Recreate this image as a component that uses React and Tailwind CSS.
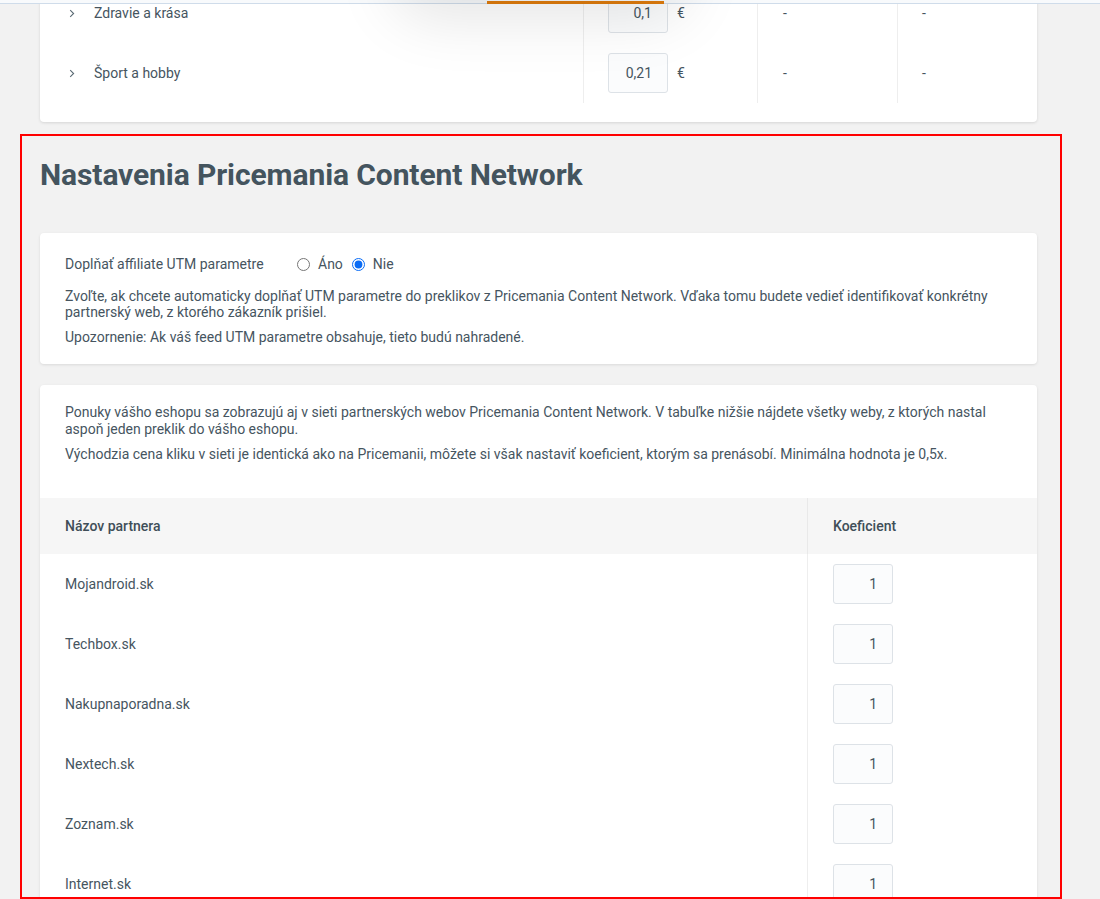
const categories = [
  { name: "Zdravie a krása", price: "0,1" },
  { name: "Šport a hobby", price: "0,21" },
];

const partners = [
  "Mojandroid.sk",
  "Techbox.sk",
  "Nakupnaporadna.sk",
  "Nextech.sk",
  "Zoznam.sk",
  "Internet.sk",
];

function Chevron() {
  return (
    <svg width="6" height="9" viewBox="0 0 6 9" className="shrink-0">
      <path d="M1.2 1.2 L4.6 4.5 L1.2 7.8" fill="none" stroke="#5b6b75" strokeWidth="1.1" />
    </svg>
  );
}

function NumBox({ value }) {
  return (
    <div className="flex h-[40px] w-[60px] items-center justify-end rounded-[3px] border border-[#dde2e7] bg-[#fbfcfd] pr-[15px] text-[14px] text-[#46555f]">
      {value}
    </div>
  );
}

export default function App() {
  return (
    <div
      className="relative min-h-[899px] overflow-hidden bg-[#f2f2f2] text-[14px] text-[#46555f]"
      style={{ fontFamily: "Roboto, 'Noto Sans', Arial, sans-serif" }}
    >
      <div className="ml-10 w-[997px]">
        {/* tail of the category price card */}
        <div className="-mt-[17px] rounded-b-[4px] bg-white pb-[19px] shadow-[0_1px_3px_rgba(0,0,0,0.12)]">
          {categories.map((c) => (
            <div key={c.name} className="flex h-[60px]">
              <div className="flex w-[543px] items-center gap-[19px] pl-[29px]">
                <Chevron />
                <span>{c.name}</span>
              </div>
              <div className="flex w-[174px] items-center gap-[9px] border-l border-[#eeeeee] pl-[24px]">
                <NumBox value={c.price} />
                <span>€</span>
              </div>
              <div className="flex w-[140px] items-center border-l border-[#eeeeee] pl-[25px]">-</div>
              <div className="flex flex-1 items-center border-l border-[#eeeeee] pl-[24px]">-</div>
            </div>
          ))}
        </div>

        <h1 className="mt-[35px] text-[30px] font-bold leading-[36px] tracking-[-0.1px] text-[#44545e]">
          Nastavenia Pricemania Content Network
        </h1>

        <div className="mt-[40px] rounded-[4px] bg-white px-[25px] pb-[19px] pt-[21px] shadow-[0_1px_3px_rgba(0,0,0,0.1)]">
          <div className="flex h-[20px] items-center">
            <span className="w-[232px]">Doplňať affiliate UTM parametre</span>
            <label className="flex items-center">
              <input type="radio" name="utm" className="m-0 h-[13px] w-[13px]" />
              <span className="ml-[8px]">Áno</span>
            </label>
            <label className="ml-[9px] flex items-center">
              <input type="radio" name="utm" defaultChecked className="m-0 h-[13px] w-[13px] accent-[#0a6cf5]" />
              <span className="ml-[8px]">Nie</span>
            </label>
          </div>
          <p className="mt-[14px] leading-[16px]">
            Zvoľte, ak chcete automaticky doplňať UTM parametre do preklikov z Pricemania Content Network. Vďaka tomu budete vedieť identifikovať konkrétny partnerský web, z ktorého zákazník prišiel.
          </p>
          <p className="mt-[9px] leading-[16px]">
            Upozornenie: Ak váš feed UTM parametre obsahuje, tieto budú nahradené.
          </p>
        </div>

        <div className="mt-[21px] rounded-[4px] bg-white shadow-[0_1px_3px_rgba(0,0,0,0.1)]">
          <div className="px-[25px] pb-[35px] pt-[19px]">
            <p className="leading-[17px]">
              Ponuky vášho eshopu sa zobrazujú aj v sieti partnerských webov Pricemania Content Network. V tabuľke nižšie nájdete všetky weby, z ktorých nastal aspoň jeden preklik do vášho eshopu.
            </p>
            <p className="mt-[8px] leading-[17px]">
              Východzia cena kliku v sieti je identická ako na Pricemanii, môžete si však nastaviť koeficient, ktorým sa prenásobí. Minimálna hodnota je 0,5x.
            </p>
          </div>
          <div className="flex h-[56px] bg-[#f6f6f6] font-medium text-[#3f4e58]">
            <div className="flex w-[767px] items-center pl-[25px]">Názov partnera</div>
            <div className="flex flex-1 items-center border-l border-[#e9e9e9] pl-[25px]">Koeficient</div>
          </div>
          {partners.map((p) => (
            <div key={p} className="flex h-[60px]">
              <div className="flex w-[767px] items-center pl-[25px]">{p}</div>
              <div className="flex flex-1 items-center border-l border-[#eeeeee] pl-[25px]">
                <NumBox value="1" />
              </div>
            </div>
          ))}
        </div>
      </div>

      {/* fixed header edge peeking at the top */}
      <div className="absolute left-0 top-0 h-[4px] w-full border-b border-[#cfdcea] bg-[#f8fafc]" />
      <div className="absolute left-[487px] top-[1px] h-[3px] w-[177px] bg-[#e07c0c]" />
      <div className="absolute left-[390px] top-[-90px] h-[90px] w-[300px] rounded-full shadow-[0_20px_60px_rgba(0,0,0,0.10)]" />

      {/* red annotation box */}
      <div className="pointer-events-none absolute left-[20px] top-[134px] h-[765px] w-[1042px] border-2 border-[#ff0000]" />
    </div>
  );
}
